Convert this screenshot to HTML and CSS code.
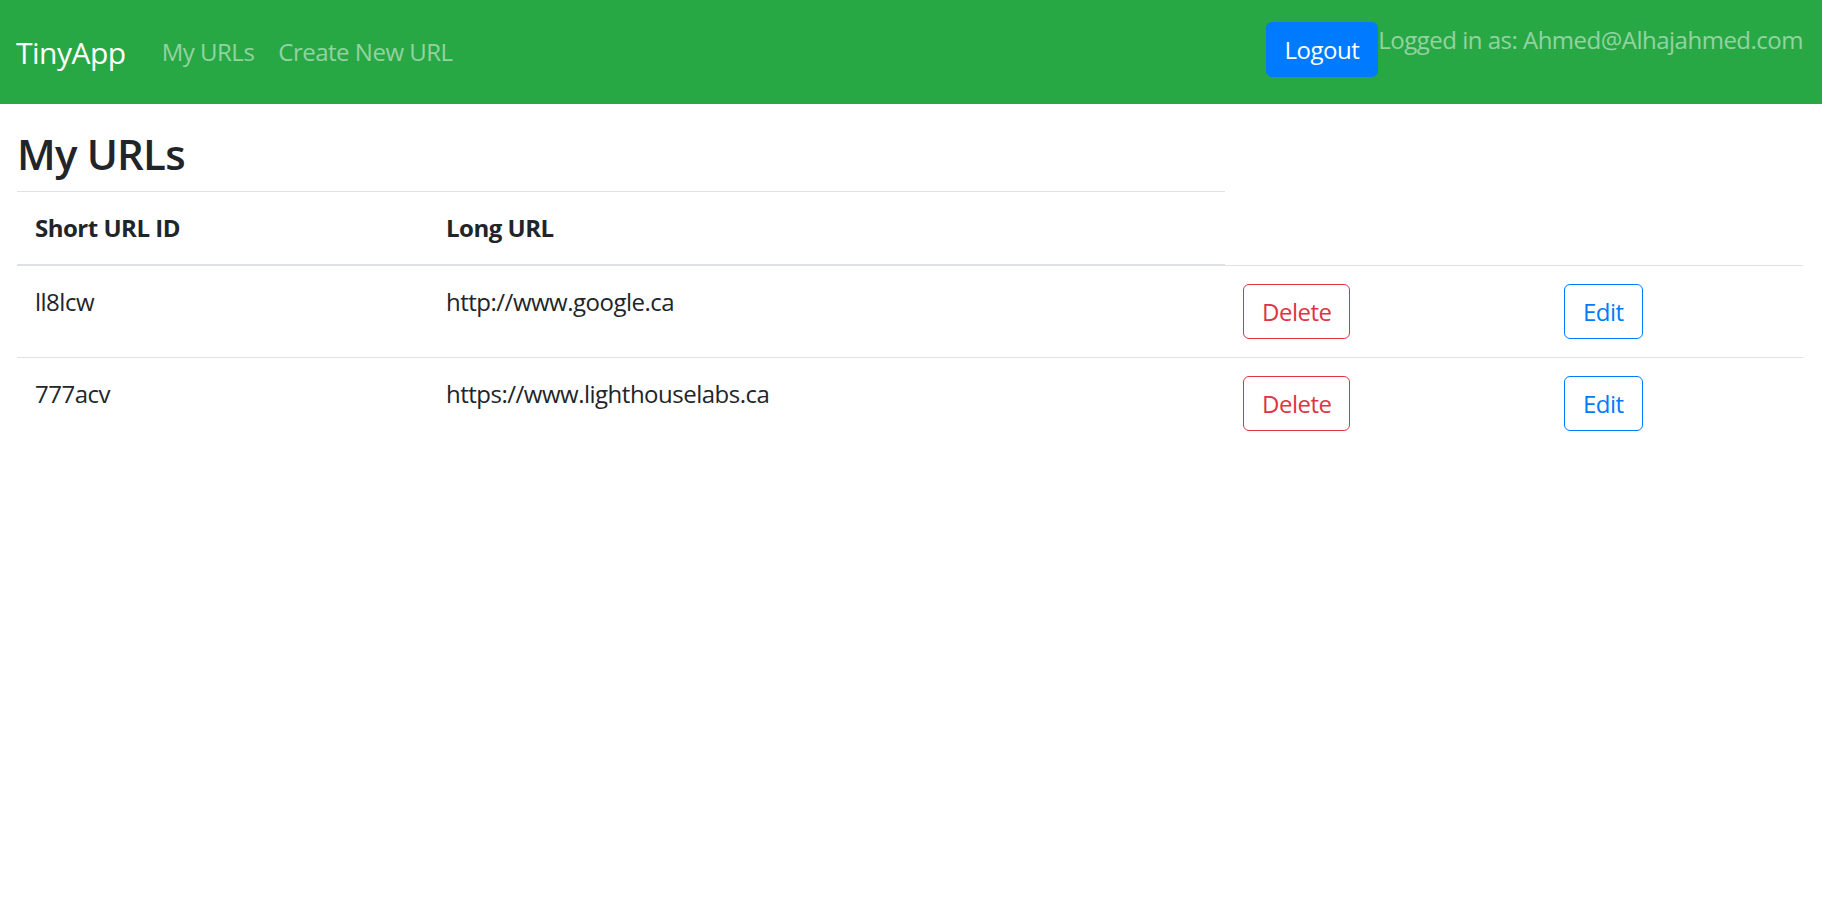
FILE: index.html
```html
<!DOCTYPE html>
<html lang="en">
<head>
<meta charset="utf-8">
<title>TinyApp</title>
<link rel="stylesheet" href="styles.css">
</head>
<body>
<nav class="navbar">
  <a class="brand" href="#">TinyApp</a>
  <ul class="nav-links">
    <li><a class="nav-link" href="#">My URLs</a></li>
    <li><a class="nav-link" href="#">Create New URL</a></li>
  </ul>
  <div class="user-area">
    <form class="logout-form">
      <button type="button" class="btn btn-primary">Logout</button>
    </form>
    <span class="user-text">Logged in as: Ahmed@Alhajahmed.com</span>
  </div>
</nav>
<main class="container">
  <h1 class="page-title">My URLs</h1>
  <table class="url-table">
    <colgroup>
      <col class="col-short">
      <col class="col-long">
      <col class="col-delete">
      <col class="col-edit">
    </colgroup>
    <thead>
      <tr>
        <th>Short URL ID</th>
        <th>Long URL</th>
      </tr>
    </thead>
    <tbody>
      <tr>
        <td>ll8lcw</td>
        <td>http://www.google.ca</td>
        <td><button type="button" class="btn btn-outline-danger">Delete</button></td>
        <td><button type="button" class="btn btn-outline-primary">Edit</button></td>
      </tr>
      <tr>
        <td>777acv</td>
        <td>https://www.lighthouselabs.ca</td>
        <td><button type="button" class="btn btn-outline-danger">Delete</button></td>
        <td><button type="button" class="btn btn-outline-primary">Edit</button></td>
      </tr>
    </tbody>
  </table>
</main>
</body>
</html>
```

FILE: styles.css
```css
* { box-sizing: border-box; }

body {
  margin: 0;
  font-family: "Open Sans", "Noto Sans", sans-serif;
  font-size: 24px;
  line-height: 36px;
  letter-spacing: -0.5px;
  color: #212529;
  background: #fff;
}

.navbar {
  display: flex;
  align-items: center;
  height: 104px;
  padding: 0 19px 0 16px;
  background: #28a745;
}

.brand {
  font-size: 30px;
  line-height: 45px;
  color: #fff;
  text-decoration: none;
  margin-right: 24px;
}

.nav-links {
  display: flex;
  list-style: none;
  margin: 0;
  padding: 0;
}

.nav-link {
  display: block;
  padding: 0 12px;
  color: rgba(255, 255, 255, 0.5);
  text-decoration: none;
}

.user-area {
  margin-left: auto;
  align-self: flex-start;
  display: flex;
  align-items: flex-start;
  padding-top: 22px;
}

.logout-form { margin: 0; }

.user-text {
  color: rgba(255, 255, 255, 0.5);
  line-height: 36px;
}

.btn {
  display: inline-block;
  font-family: inherit;
  font-size: 24px;
  line-height: 35px;
  letter-spacing: -0.5px;
  padding: 9px 18px;
  border: 1px solid transparent;
  border-radius: 6px;
  background: transparent;
  cursor: pointer;
}

.btn-primary {
  background: #007bff;
  border-color: #007bff;
  color: #fff;
}

.btn-outline-danger {
  color: #dc3545;
  border-color: #dc3545;
}

.btn-outline-primary {
  color: #007bff;
  border-color: #007bff;
}

.container {
  padding: 0 19px 0 17px;
}

.page-title {
  font-size: 42px;
  font-weight: 600;
  line-height: 50px;
  letter-spacing: -0.8px;
  margin: 25px 0 12px;
}

.url-table {
  width: 100%;
  border-collapse: collapse;
  table-layout: fixed;
}

.col-short { width: 411px; }
.col-long { width: 797px; }
.col-delete { width: 321px; }

.url-table th,
.url-table td {
  padding: 18px;
  text-align: left;
  vertical-align: top;
  border-top: 1px solid #dee2e6;
}

.url-table th {
  font-weight: 700;
  border-bottom: 2px solid #dee2e6;
}
```
